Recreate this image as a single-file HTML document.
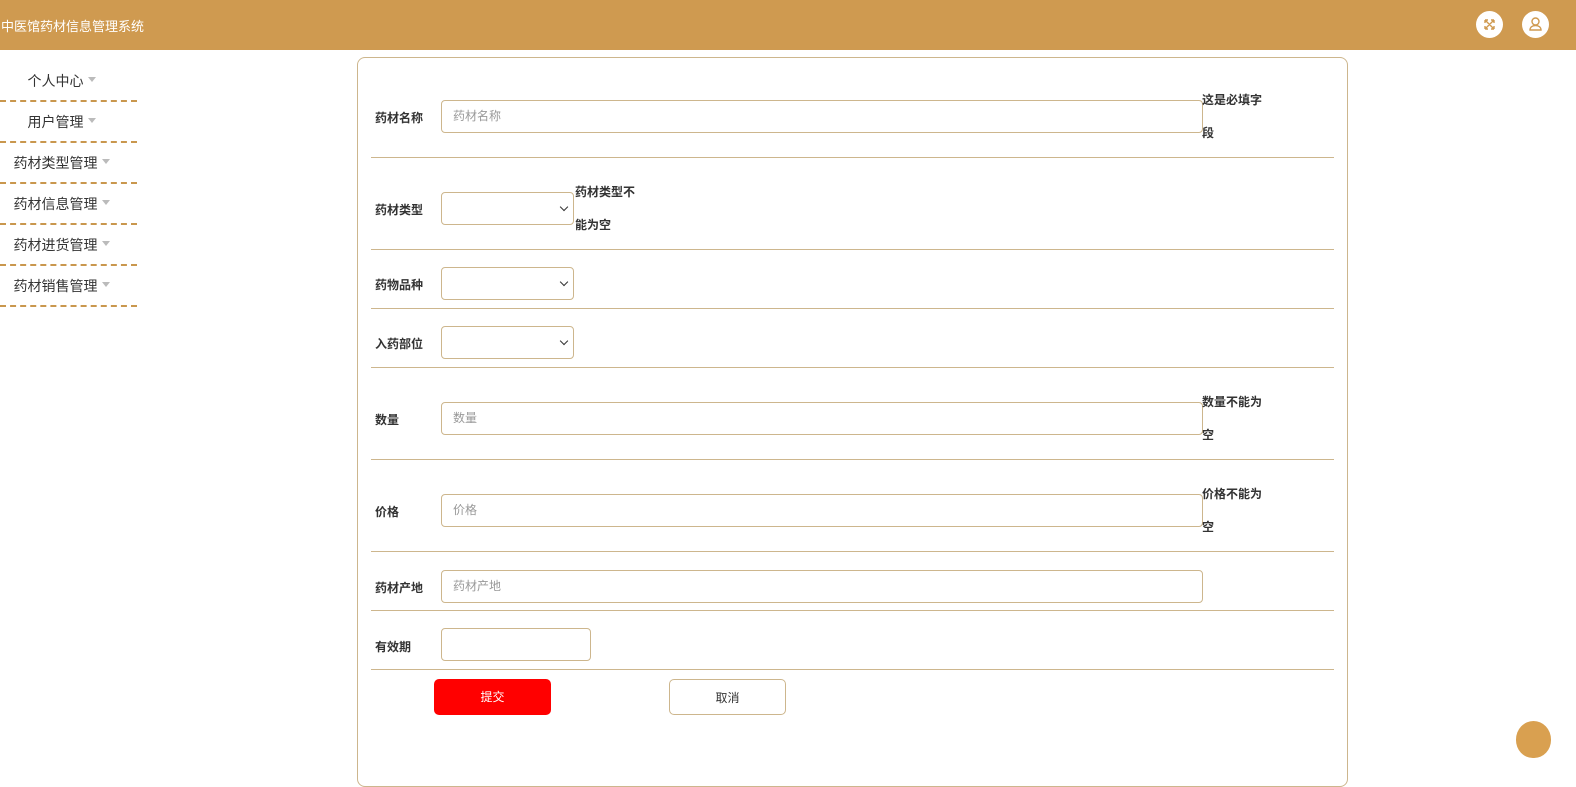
<!DOCTYPE html>
<html><head><meta charset="utf-8"><style>
*{margin:0;padding:0;box-sizing:border-box}
body{width:1576px;height:768px;overflow:hidden;background:#fff;font-family:"Liberation Sans","Noto Sans CJK SC",sans-serif;position:relative}
.hdr{position:absolute;left:0;top:0;width:1576px;height:50px;background:#cf9a50}
.hdr .t{position:absolute;left:1px;top:16px;color:#fff;font-size:13px}
.ic{position:absolute;top:11px;width:27px;height:27px;border-radius:50%;background:#fff}
.side{position:absolute;left:0;top:61px;width:137px}
.side div{height:41px;border-bottom:2px dashed #c9974e;font-size:14px;color:#333;text-align:center;line-height:41px;padding-right:14px}
.side div span{display:inline-block;width:0;height:0;border:4px solid transparent;border-top:5px solid #bbb;margin-left:4px;vertical-align:0}
.box{position:absolute;left:357px;top:57px;width:991px;height:730px;border:1px solid #cdb68d;border-radius:8px}
.sep{position:absolute;left:371px;width:963px;height:1px;background:#cdb68d}
.lb{position:absolute;left:375px;font-size:12px;font-weight:bold;color:#333}
.in{position:absolute;left:441px;height:33px;border:1px solid #cdb68d;border-radius:4px;font-size:12px;color:#999;padding-left:11px;line-height:31px}
.sel::after{content:"";position:absolute;right:6px;top:11px;width:5px;height:5px;border-right:1.5px solid #333;border-bottom:1.5px solid #333;transform:rotate(45deg)}
.er{position:absolute;font-size:12px;font-weight:bold;color:#333;line-height:33px}
.btn{position:absolute;top:679px;width:117px;height:36px;border-radius:5px;font-size:12px;text-align:center;line-height:36px}
</style></head><body>
<div class="hdr"><div class="t">中医馆药材信息管理系统</div>
<div class="ic" style="left:1476px"><svg width="27" height="27" viewBox="0 0 27 27" fill="none" stroke="#cf9a50" stroke-width="1.4"><path d="M9 9l9 9M18 9l-9 9M9 9h3M9 9v3M18 9h-3M18 9v3M9 18h3M9 18v-3M18 18h-3M18 18v-3"/></svg></div>
<div class="ic" style="left:1522px"><svg width="27" height="27" viewBox="0 0 27 27" fill="none" stroke="#cf9a50" stroke-width="1.4"><circle cx="13.5" cy="10.5" r="3.5"/><path d="M8 19c0-3 2.5-4.5 5.5-4.5S19 16 19 19z"/></svg></div>
</div>
<div class="side">
<div>个人中心<span></span></div><div>用户管理<span></span></div><div>药材类型管理<span></span></div><div>药材信息管理<span></span></div><div>药材进货管理<span></span></div><div>药材销售管理<span></span></div>
</div>
<div class="box"></div>
<div class="sep" style="top:157px"></div><div class="sep" style="top:249px"></div><div class="sep" style="top:308px"></div><div class="sep" style="top:367px"></div><div class="sep" style="top:459px"></div><div class="sep" style="top:551px"></div><div class="sep" style="top:610px"></div><div class="sep" style="top:669px"></div>

<div class="lb" style="top:109px">药材名称</div><div class="in" style="top:100px;width:762px">药材名称</div>
<div class="er" style="left:1202px;top:84px">这是必填字<br>段</div>

<div class="lb" style="top:201px">药材类型</div><div class="in sel" style="top:192px;width:133px"></div>
<div class="er" style="left:575px;top:176px">药材类型不<br>能为空</div>

<div class="lb" style="top:276px">药物品种</div><div class="in sel" style="top:267px;width:133px"></div>
<div class="lb" style="top:335px">入药部位</div><div class="in sel" style="top:326px;width:133px"></div>

<div class="lb" style="top:411px">数量</div><div class="in" style="top:402px;width:762px">数量</div>
<div class="er" style="left:1202px;top:386px">数量不能为<br>空</div>

<div class="lb" style="top:503px">价格</div><div class="in" style="top:494px;width:762px">价格</div>
<div class="er" style="left:1202px;top:478px">价格不能为<br>空</div>

<div class="lb" style="top:579px">药材产地</div><div class="in" style="top:570px;width:762px">药材产地</div>
<div class="lb" style="top:638px">有效期</div><div class="in" style="top:628px;width:150px"></div>

<div class="btn" style="left:434px;background:#ff0000;color:#fff">提交</div>
<div class="btn" style="left:669px;border:1px solid #cdb68d;color:#333">取消</div>
<div style="position:absolute;left:1516px;top:721px;width:35px;height:37px;border-radius:50% 50% 48% 48%;background:#d9a050"></div>
</body></html>
